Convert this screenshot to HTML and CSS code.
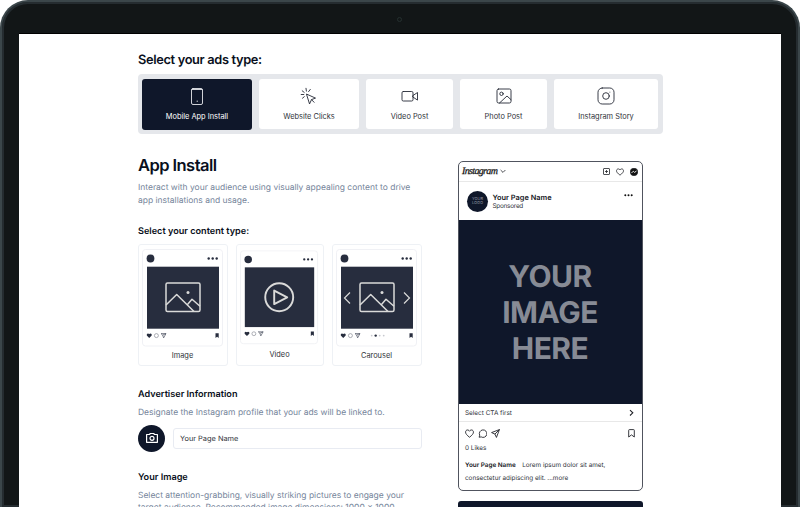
FILE: index.html
```html
<!DOCTYPE html>
<html lang="en">
<head>
<meta charset="utf-8">
<title>Ads preview</title>
<link rel="stylesheet" href="styles.css">
</head>
<body>
<svg class="defs" width="0" height="0" aria-hidden="true">
  <symbol id="post" viewBox="0 0 82 98">
    <rect x=".5" y=".5" width="80" height="96.500" rx="3" fill="#fff" stroke="#f0f1f5"/>
    <circle cx="8.500" cy="9.500" r="3.900" fill="#272d3e"/>
    <g fill="#272d3e"><circle cx="66.700" cy="9.500" r="1.200"/><circle cx="70.700" cy="9.500" r="1.200"/><circle cx="74.700" cy="9.500" r="1.200"/></g>
    <rect x="5" y="17.700" width="72" height="62" fill="#272d3e"/>
    <path d="M7.200 88.900 4.800 86.500q-.4-2 1.200-2l1.200.6 1.200-.6q1.800 0 1.300 2z" fill="#272d3e"/>
    <circle cx="14.400" cy="86.600" r="2" fill="none" stroke="#777b87" stroke-width=".6"/>
    <path d="m19 84.600h5l-2.400 4.300-.9-2.800zm1.700 1.500 3.300-1.500" fill="none" stroke="#4b5060" stroke-width=".7"/>
    <path d="M73.500 84.300h3.200v4.600l-1.600-1.200-1.600 1.200z" fill="#272d3e"/>
  </symbol>
  <symbol id="landscape" viewBox="0 0 36 31">
    <g fill="none" stroke="#dadad9" stroke-width="1.500" stroke-linejoin="round"><rect x="1" y="1" width="34" height="28.500" rx="1.500"/><path d="m1 23 10.700-10.500L29 29.500M22.500 22.500l4.500-5.300 8 7"/></g>
    <circle cx="23" cy="10.500" r="1.500" fill="#dadad9"/>
  </symbol>
</svg>
<div class="device">
  <span class="camera"></span>
  <main class="screen">
    <h2 class="title">Select your ads type:</h2>
    <nav class="tabs">
      <button class="tab active"><svg width="16" height="18" viewBox="0 0 16 18"><rect x="2.500" y="1.500" width="11" height="16" rx="1.500"/><path d="M3 2.500h10M8 14.200h.6"/></svg><span>Mobile App Install</span></button>
      <button class="tab"><svg width="18" height="18" viewBox="0 0 18 18"><path d="m6.800 7.200 8.700 3.900-4 1.500-1.800 4zM11.600 12.700l2.500 2.600M6 1.300l.4 2.800M2.200 3.800l2 1.600M1.200 7.500h2.600M2.500 11.200l1.800-1.500M10.300 2.400 8.600 4.600"/></svg><span>Website Clicks</span></button>
      <button class="tab"><svg width="18" height="18" viewBox="0 0 18 18"><rect x="1" y="4.500" width="11" height="9.500" rx="1.300"/><path d="m12 8.500 4.500-3v7.600l-4.500-3z"/></svg><span>Video Post</span></button>
      <button class="tab"><svg width="18" height="18" viewBox="0 0 18 18"><rect x="2" y="2" width="14" height="14" rx="1.600"/><circle cx="6.500" cy="6.800" r="1.700"/><path d="m4.500 16 7.500-7 4 3.700"/></svg><span>Photo Post</span></button>
      <button class="tab"><svg width="18" height="18" viewBox="0 0 18 18"><rect x="1" y="1" width="16" height="16" rx="4.200"/><circle cx="9" cy="9" r="3.300"/><path d="M12.700 5.200h.3" stroke-width=".6"/></svg><span>Instagram Story</span></button>
    </nav>
    <div class="columns">
      <section class="form">
        <h1>App Install</h1>
        <p class="intro">Interact with your audience using visually appealing content to drive<br>app installations and usage.</p>
        <h3 class="type-title">Select your content type:</h3>
        <div class="types">
          <button class="type">
            <svg width="82" height="98" viewBox="0 0 82 98"><use href="#post"/><use href="#landscape" x="23" y="33" width="36" height="31"/></svg>
            <span>Image</span>
          </button>
          <button class="type video">
            <svg width="79" height="95" viewBox="0 0 82 98"><use href="#post"/><g fill="none" stroke="#dadad9" stroke-width="2"><circle cx="40.700" cy="48.800" r="14.500"/><path d="m35.500 41.800 13.500 7-13.500 7z" stroke-linejoin="round"/></g></svg>
            <span>Video</span>
          </button>
          <button class="type">
            <svg width="82" height="98" viewBox="0 0 82 98"><use href="#post"/><use href="#landscape" x="23" y="33" width="36" height="31"/><path d="m14 43.500-5.500 5.500 5.500 5.500M68 43.500l5.500 5.500-5.500 5.500" fill="none" stroke="#dadad9" stroke-width="1.200"/><g fill="#c7c9cf"><circle cx="35.700" cy="86.600" r=".9"/><circle cx="39.700" cy="86.600" r="1.200" fill="#272d3e"/><circle cx="43.700" cy="86.600" r=".9"/><circle cx="47.700" cy="86.600" r=".9"/></g></svg>
            <span>Carousel</span>
          </button>
        </div>
        <h3 class="adv-title">Advertiser Information</h3>
        <p class="adv-text">Designate the Instagram profile that your ads will be linked to.</p>
        <div class="profile-row">
          <span class="photo"><svg width="14" height="12" viewBox="0 0 14 12"><path d="M1.600 2.500h2.800l1-1h3.200l1 1h2.800v7.800H1.600z" fill="none" stroke="#fff" stroke-width="1.200" stroke-linejoin="round"/><circle cx="7" cy="6.300" r="2" fill="none" stroke="#fff" stroke-width="1.200"/></svg></span>
          <div class="field">Your Page Name</div>
        </div>
        <h3 class="img-title">Your Image</h3>
        <p class="img-text">Select attention-grabbing, visually striking pictures to engage your<br>target audience. Recommended image dimensions: 1000 x 1000</p>
      </section>
      <aside class="side">
        <article class="preview">
          <header class="bar">
            <span class="brand">Instagram</span>
            <svg class="chev" width="6" height="5" viewBox="0 0 6 5"><path d="m.6 1 2.400 2.400L5.400 1"/></svg>
            <svg class="plus" width="7" height="7" viewBox="0 0 7 7"><rect x=".5" y=".5" width="6" height="6" rx=".5"/><path d="M3.500 2v3M2 3.500h3"/></svg>
            <svg class="bar-heart" width="8" height="8" viewBox="0 0 24 24"><path class="bold-line" d="M12 21.500C5 16 1.500 12.500 1.500 8.300 1.500 2.500 9 .5 12 6c3-5.500 10.500-3.500 10.500 2.300 0 4.200-3.500 7.700-10.500 13.200z"/></svg>
            <svg class="messenger" width="8" height="8" viewBox="0 0 8 8"><circle cx="4" cy="3.900" r="3.700" fill="#111"/><path d="m1.500 5 1.800-1.800 1.300 1.200 1.900-1.400" stroke="#fff" stroke-width=".9"/></svg>
          </header>
          <div class="owner">
            <span class="logo">YOUR<br>LOGO</span>
            <div class="names"><b>Your Page Name</b><span>Sponsored</span></div>
            <svg class="dots" width="9" height="3" viewBox="0 0 9 3"><circle cx="1.300" cy="1.300" r="1"/><circle cx="4.500" cy="1.300" r="1"/><circle cx="7.700" cy="1.300" r="1"/></svg>
          </div>
          <div class="picture">YOUR<br>IMAGE<br>HERE</div>
          <div class="cta"><span>Select CTA first</span><svg width="5" height="8" viewBox="0 0 5 8"><path d="m1 1.200 2.800 2.600L1 6.500" stroke-width="1.100"/></svg></div>
          <div class="actions">
            <svg width="9" height="9" viewBox="0 0 24 24"><path class="bold-line" d="M12 22C5 16.500 1.500 12.500 1.500 8.300 1.500 2 9 .5 12 6c3-5.500 10.500-4 10.500 2.300 0 4.200-3.500 8.200-10.500 13.700z"/></svg>
            <svg width="9" height="9" viewBox="0 0 24 24"><path class="bold-line" d="M3 22l1.500-5.500A10 10 0 1 1 8.500 21z"/></svg>
            <svg width="9" height="9" viewBox="0 0 24 24"><path class="bold-line" d="M22.500 1.500 1.500 9.500l9 4 4 9zM10.500 13.500l12-12" stroke-linejoin="round"/></svg>
            <svg class="save" width="7" height="9" viewBox="0 0 7 9"><path d="M.7 8V1.300q0-.7.700-.7h4.200q.7 0 .7.700V8L3.500 5.900z" stroke-width=".9"/></svg>
          </div>
          <div class="likes">0 Likes</div>
          <div class="caption"><b>Your Page Name</b><span class="lorem">Lorem ipsum dolor sit amet,</span><br><span class="more">consectetur adipiscing elit. ...more</span></div>
        </article>
        <button class="submit" aria-label="Continue"></button>
      </aside>
    </div>
  </main>
</div>
</body>
</html>
```
FILE: styles.css
```css
* { box-sizing: border-box; }
body { margin: 0; height: 507px; overflow: hidden; background: #fff; font-family: Inter, sans-serif; color: #0f172a; text-rendering: geometricPrecision; }
h1, h2, h3, p { margin: 0; white-space: nowrap; }
h1, h2, h3 { font-weight: 600; color: #090f20; }
button { font: inherit; color: inherit; border: 0; padding: 0; }
svg { display: block; flex: none; }
.defs { position: absolute; }
.device { position: relative; height: 507px; overflow: hidden; padding: 31px 17px 0; background: #121617; border: 2px solid #3b464a; border-bottom: 0; border-radius: 28px 28px 0 0; box-shadow: inset 0 0 0 2px #252c30; }
.camera { position: absolute; left: 395px; top: 15px; width: 5px; height: 5px; border: 1px solid #25302f; border-radius: 50%; }
.screen { height: 474px; overflow: hidden; background: #fff; border-top: 1px solid #000; padding: 20px 119px 0; }
.title { font-size: 12.800px; line-height: 14px; letter-spacing: -.33px; }
.tabs { width: 525px; height: 60px; margin-top: 6px; padding: 4px; display: grid; grid-template-columns: 110px 100px 87px 87px 104px; column-gap: 7px; align-items: center; background: #e5e7eb; border-radius: 4px; }
.tab { height: 50px; padding-top: 8px; display: flex; flex-direction: column; align-items: center; gap: 5px; background: #fff; border-radius: 3px; font-size: 7.400px; line-height: 13px; white-space: nowrap; color: #30333a; }
.tab svg { height: 18px; fill: none; stroke: #252936; stroke-width: .9; stroke-linejoin: round; stroke-linecap: round; }
.tab.active { height: 51px; background: #0f172a; color: #fff; }
.tab.active svg { stroke: #e5e7eb; }
.columns { display: flex; gap: 36px; }
.form { width: 284px; padding-top: 21px; }
h1 { font-size: 16.500px; line-height: 20px; letter-spacing: -.55px; }
p { font-size: 8.470px; line-height: 12.500px; color: #74849a; }
.intro { margin-top: 7px; }
h3 { font-size: 9.150px; line-height: 12px; }
.type-title { margin-top: 19px; }
.types { height: 122px; margin: 6px 0 0 -.5px; display: grid; grid-template-columns: 90px 88px 90px; gap: 8px; }
.type { display: flex; flex-direction: column; align-items: center; gap: 4px; padding-top: 4px; border: 1px solid #eef1f5; border-radius: 3px; background: #fff; font-size: 7.400px; line-height: 10px; color: #30333a; }
.type.video { padding-top: 5px; gap: 5px; }
.adv-title { margin-top: 23px; }
.adv-text { margin-top: 6px; }
.profile-row { display: flex; align-items: center; gap: 8px; margin-top: 5px; }
.photo { width: 27px; height: 27px; display: grid; place-items: center; border-radius: 50%; background: #0f172a; }
.field { flex: 1; height: 21px; padding-left: 6px; border: 1px solid #e8ebf2; border-radius: 3px; font-size: 7.400px; line-height: 19px; color: #30333a; }
.img-title { margin-top: 20px; }
.img-text { margin-top: 6px; }
.side { width: 185px; padding-top: 27px; }
.preview { height: 330px; border: 1px solid #50545e; border-radius: 5px; overflow: hidden; }
.preview svg { fill: none; stroke: #22242a; stroke-width: .8; }
.preview .bold-line { stroke-width: 2.400; }
.bar { height: 20px; padding: 0 4px 0 3px; display: flex; align-items: center; border-bottom: 1px solid #e8e8e8; }
.brand { width: 36px; font: italic 400 10px "Liberation Serif", serif; letter-spacing: -.65px; color: #111; -webkit-text-stroke: .25px #111; }
.chev { margin-left: 2px; }
.plus { margin-left: auto; }
.bar-heart { margin-left: 6px; }
.messenger { margin-left: 6px; }
.owner { height: 38px; padding: 0 9px 0 8px; display: flex; align-items: center; }
.logo { width: 21px; height: 21px; padding-top: 6px; border-radius: 50%; background: #0f172a; color: #9298a5; font-size: 4px; line-height: 4.500px; text-align: center; }
.names { margin: 1px 0 0 4.500px; display: flex; flex-direction: column; font-size: 6.400px; line-height: 9px; letter-spacing: -.25px; white-space: nowrap; color: #30333a; }
.names b { font-size: 7.400px; font-weight: 600; letter-spacing: 0; color: #15171d; }
.preview .dots { margin: 0 0 11px auto; fill: #111; stroke: none; }
.picture { height: 184px; padding: 2px 1px 0 0; display: flex; align-items: center; justify-content: center; background: #0f172a; color: #878b95; font-size: 30px; line-height: 36px; font-weight: 700; letter-spacing: -.5px; text-align: center; }
.cta { height: 18px; padding: 0 8px 0 6px; display: flex; align-items: center; justify-content: space-between; border-bottom: 1px solid #e8e8e8; font-size: 6.400px; color: #30333a; }
.actions { height: 21px; padding: 2px 7px 0 5.500px; display: flex; align-items: center; gap: 4px; }
.actions .save { margin-left: auto; }
.likes { padding-left: 6px; font-size: 6.400px; line-height: 10px; color: #30333a; }
.caption { margin-top: 6px; padding-left: 6px; font-size: 6.350px; line-height: 12.500px; white-space: nowrap; color: #30333a; }
.caption b { font-weight: 600; color: #15171d; }
.lorem { margin-left: 6.500px; }
.submit { display: block; width: 185px; height: 24px; margin-top: 10px; border-radius: 3px; background: #0f172a; }
```
